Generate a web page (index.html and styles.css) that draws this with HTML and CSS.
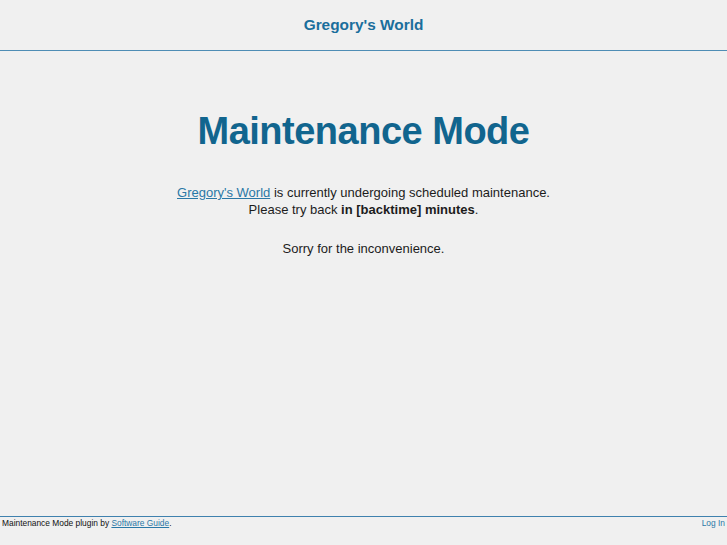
FILE: index.html
```html
<!DOCTYPE html>
<html>
<head>
<meta charset="utf-8">
<link rel="stylesheet" href="styles.css">
</head>
<body>
<div class="page">
  <header class="top">
    <div class="site-title">Gregory's World</div>
  </header>
  <main class="main">
    <h1 class="title">Maintenance Mode</h1>
    <p class="msg"><a href="#" class="link">Gregory's World</a> is currently undergoing scheduled maintenance.<br>Please try back <strong>in [backtime] minutes</strong>.</p>
    <p class="msg">Sorry for the inconvenience.</p>
  </main>
  <footer class="foot">
    <div class="credit">Maintenance Mode plugin by <a href="#" class="link">Software Guide</a>.</div>
    <a href="#" class="login">Log In</a>
  </footer>
</div>
</body>
</html>
```

FILE: styles.css
```css
html, body {
  margin: 0;
  padding: 0;
  height: 100%;
  background: #f0f0f0;
}
body {
  font-family: "Liberation Sans", Arial, sans-serif;
  color: #1c1c1c;
}
.page {
  display: flex;
  flex-direction: column;
  height: 100%;
}
.top {
  height: 50px;
  border-bottom: 1px solid #4f8db5;
  display: flex;
  align-items: center;
  justify-content: center;
}
.site-title {
  font-size: 15.4px;
  font-weight: bold;
  color: #1a6e9c;
  margin-top: 0;
}
.main {
  flex: 1;
  text-align: center;
}
.title {
  margin: 56px 0 0;
  font-size: 38px;
  letter-spacing: -0.5px;
  font-weight: bold;
  color: #11658e;
  line-height: 48px;
}
.msg {
  font-size: 13px;
  line-height: 17px;
  margin: 29px 0 0;
}
.msg + .msg {
  margin-top: 22px;
}
.link {
  color: #2a78a6;
}
.foot {
  border-top: 1px solid #3f81ae;
  display: flex;
  justify-content: space-between;
  height: 28px;
  font-size: 8.4px;
  padding: 0 2px;
  line-height: 12px;
}
.credit {
  color: #111;
}
.login {
  color: #2a78a6;
  text-decoration: none;
}
```
